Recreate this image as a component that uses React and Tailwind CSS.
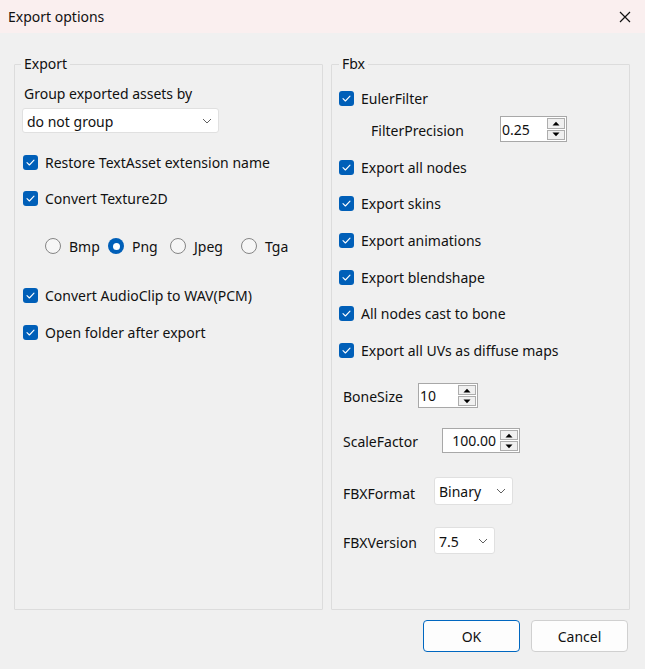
import React from "react";

const Check = () => (
  <span className="w-[15px] h-[15px] rounded-[3px] bg-[#005fb8] flex items-center justify-center shrink-0">
    <svg width="9" height="7" viewBox="0 0 9 7" fill="none">
      <path d="M1 3.6 L3.4 6 L8 1.2" stroke="white" strokeWidth="1.1" strokeLinecap="round" strokeLinejoin="round" />
    </svg>
  </span>
);

const CbRow = ({ label, ml = "ml-[8px]", mt }) => (
  <div className={`flex items-center h-[20px] ${ml} ${mt}`}>
    <Check />
    <span className="ml-[7px] leading-[20px] pt-[1px]">{label}</span>
  </div>
);

const Radio = ({ checked, label, w }) => (
  <div className={`flex items-center ${w}`}>
    {checked ? (
      <span className="w-[16px] h-[16px] rounded-full bg-[#005fb8] flex items-center justify-center shrink-0">
        <span className="w-[7px] h-[7px] rounded-full bg-white" />
      </span>
    ) : (
      <span className="w-[16px] h-[16px] rounded-full border border-[#858585] bg-[#f6f6f6] shrink-0" />
    )}
    <span className="ml-[8px] pt-[1px]">{label}</span>
  </div>
);

const Chevron = () => (
  <svg width="10" height="6" viewBox="0 0 10 6" fill="none">
    <path d="M1 1 L5 5 L9 1" stroke="#606060" strokeWidth="1" />
  </svg>
);

const Select = ({ value, cls }) => (
  <div className={`flex items-center justify-between bg-white border border-[#e0e0e0] rounded-[3px] ${cls}`}>
    <span className="pl-[4px] pt-[1px]">{value}</span>
    <span className="pr-[6px] flex items-center">
      <Chevron />
    </span>
  </div>
);

const Tri = ({ up }) => (
  <svg width="8" height="5" viewBox="0 0 8 5">
    {up ? <path d="M0.5 4.5 L4 0.8 L7.5 4.5 Z" fill="#000" /> : <path d="M0.5 0.5 L4 4.2 L7.5 0.5 Z" fill="#000" />}
  </svg>
);

const Spinner = ({ value, cls, right }) => (
  <div className={`flex bg-white border border-[#a8a8a8] ${cls}`}>
    <div className={`flex-1 flex items-center ${right ? "justify-end pr-[3px]" : "pl-[1px]"}`}>{value}</div>
    <div className="w-[20px] flex flex-col p-[1px] gap-[1px]">
      <div className="flex-1 bg-[#f0f0f0] border border-[#adadad] flex items-center justify-center">
        <Tri up />
      </div>
      <div className="flex-1 bg-[#f0f0f0] border border-[#adadad] flex items-center justify-center">
        <Tri />
      </div>
    </div>
  </div>
);

export default function App() {
  return (
    <div
      className="w-[645px] h-[669px] bg-[#f0f0f0] text-[#111] text-[14px] overflow-hidden"
      style={{ fontFamily: '"Noto Sans", "Open Sans", sans-serif' }}
    >
      <div className="h-[33px] bg-[#faefef] flex items-center justify-between pl-[8px] pr-[14px]">
        <span className="text-[14px]">Export options</span>
        <svg width="12" height="12" viewBox="0 0 12 12">
          <path d="M1 1 L11 11 M11 1 L1 11" stroke="#111" strokeWidth="1.2" />
        </svg>
      </div>

      <div className="flex pl-[14px] pt-[21px] gap-[8px]">
        <fieldset className="w-[309px] h-[556px] border border-[#dcdcdc] rounded-[1px]">
          <legend className="ml-[6px] px-[3px] leading-[20px]">Export</legend>
          <div className="ml-[9px] mt-[9px] leading-[20px] pt-[1px]">Group exported assets by</div>
          <Select value="do not group" cls="ml-[7px] mt-[4px] w-[197px] h-[25px]" />
          <CbRow label="Restore TextAsset extension name" mt="mt-[19px]" />
          <CbRow label="Convert Texture2D" mt="mt-[16px]" />
          <div className="flex items-center h-[20px] mt-[28px] ml-[30px]">
            <Radio label="Bmp" w="w-[63px]" />
            <Radio label="Png" checked w="w-[62px]" />
            <Radio label="Jpeg" w="w-[71px]" />
            <Radio label="Tga" w="w-[60px]" />
          </div>
          <CbRow label="Convert AudioClip to WAV(PCM)" mt="mt-[29px]" />
          <CbRow label="Open folder after export" mt="mt-[17px]" />
        </fieldset>

        <fieldset className="w-[299px] h-[556px] border border-[#dcdcdc] rounded-[1px]">
          <legend className="ml-[7px] px-[3px] leading-[20px]">Fbx</legend>
          <CbRow label="EulerFilter" ml="ml-[7px]" mt="mt-[14px]" />
          <div className="flex items-center h-[26px] mt-[8px]">
            <span className="ml-[39px] w-[129px] pt-[2px]">FilterPrecision</span>
            <Spinner value="0.25" cls="w-[67px] h-[26px]" />
          </div>
          <CbRow label="Export all nodes" ml="ml-[7px]" mt="mt-[15px]" />
          <CbRow label="Export skins" ml="ml-[7px]" mt="mt-[16px]" />
          <CbRow label="Export animations" ml="ml-[7px]" mt="mt-[17px]" />
          <CbRow label="Export blendshape" ml="ml-[7px]" mt="mt-[17px]" />
          <CbRow label="All nodes cast to bone" ml="ml-[7px]" mt="mt-[16px]" />
          <CbRow label="Export all UVs as diffuse maps" ml="ml-[7px]" mt="mt-[17px]" />
          <div className="flex items-center h-[25px] mt-[23px]">
            <span className="ml-[11px] w-[75px] pt-[2px]">BoneSize</span>
            <Spinner value="10" cls="w-[60px] h-[25px]" />
          </div>
          <div className="flex items-center h-[25px] mt-[20px]">
            <span className="ml-[11px] w-[99px] pt-[2px]">ScaleFactor</span>
            <Spinner value="100.00" right cls="w-[78px] h-[25px]" />
          </div>
          <div className="flex items-center h-[28px] mt-[24px]">
            <span className="ml-[11px] w-[91px] pt-[4px]">FBXFormat</span>
            <Select value="Binary" cls="w-[79px] h-[28px]" />
          </div>
          <div className="flex items-center h-[27px] mt-[22px]">
            <span className="ml-[11px] w-[91px] pt-[4px]">FBXVersion</span>
            <Select value="7.5" cls="w-[61px] h-[27px]" />
          </div>
        </fieldset>
      </div>

      <div className="flex justify-end gap-[11px] pr-[17px] mt-[10px]">
        <button className="w-[97px] h-[32px] bg-[#fdfdfd] border border-[#0067c0] rounded-[4px] text-[14px]">OK</button>
        <button className="w-[97px] h-[32px] bg-[#fdfdfd] border border-[#d0d0d0] rounded-[4px] text-[14px]">Cancel</button>
      </div>
    </div>
  );
}
